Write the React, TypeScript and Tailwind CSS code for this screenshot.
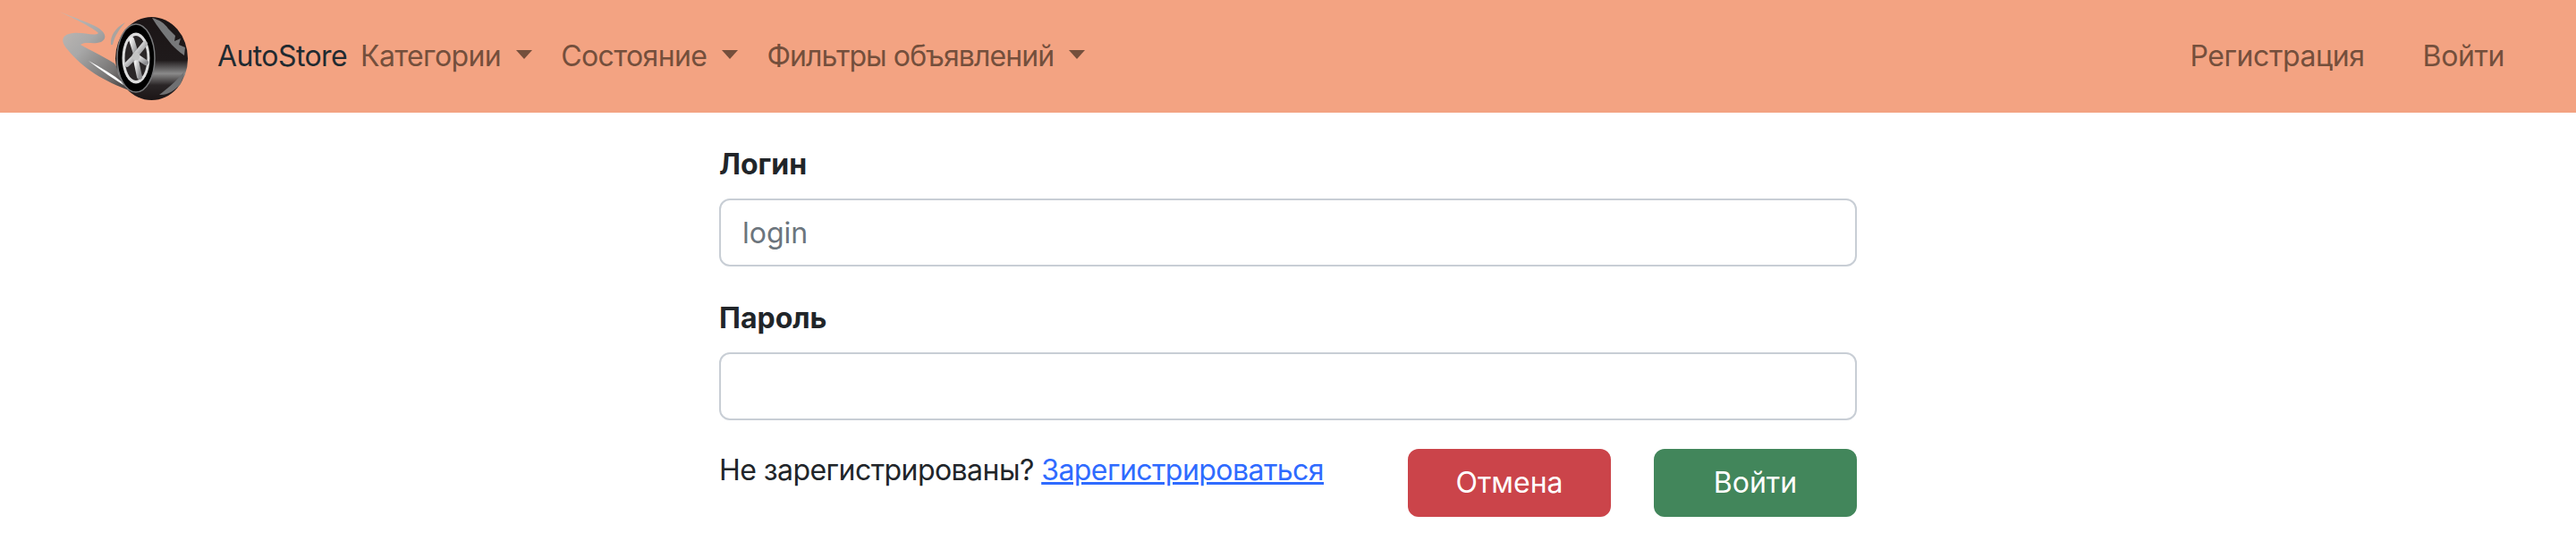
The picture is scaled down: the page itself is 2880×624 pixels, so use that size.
import React from "react";

const TireLogo = () => (
  <svg width="180" height="126" viewBox="0 0 180 126" className="shrink-0">
    <defs>
      <linearGradient id="swoosh" x1="0" y1="0" x2="1" y2="1">
        <stop offset="0" stopColor="#c4bdb8" />
        <stop offset="0.4" stopColor="#a8a8a8" />
        <stop offset="0.75" stopColor="#777574" />
        <stop offset="1" stopColor="#3a3636" />
      </linearGradient>
      <linearGradient id="band" x1="0" y1="0" x2="0" y2="1">
        <stop offset="0" stopColor="#1b1516" />
        <stop offset="0.52" stopColor="#1f1a1b" />
        <stop offset="0.68" stopColor="#8a8a8a" />
        <stop offset="0.82" stopColor="#2a2526" />
        <stop offset="1" stopColor="#1b1516" />
      </linearGradient>
      <linearGradient id="rim" x1="0" y1="0" x2="1" y2="1">
        <stop offset="0" stopColor="#eeeeee" />
        <stop offset="1" stopColor="#8c8c8f" />
      </linearGradient>
    </defs>
    <path d="M16 13C34 20 48 25 56 29C66 34 72 42 63 47C54 50 46 46 40 50C52 57 64 62 78 71L95 101C68 92 42 76 26 56C16 45 20 38 32 37C44 36 56 41 60 37C54 31 34 21 16 13Z" fill="url(#swoosh)" />
    <path d="M49 68C62 75 76 83 88 93L93 98C78 89 62 78 49 68Z" fill="#ffffff" />
    <path d="M74 50C73 40 79 31 90 25C84 32 78 40 76 50Z" fill="#a8a4a0" />
    <ellipse cx="119.5" cy="65.5" rx="40.5" ry="46.5" fill="url(#band)" />
    <path d="M120 20C128 22 134 26 138 32L146 40L145 46L152 43L150 50L157 53L156 62C150 58 146 54 142 50C134 40 126 30 120 20Z" fill="#77787a" />
    <path d="M128 106C136 100 146 92 156 80L152 94C146 100 138 107 128 106Z" fill="#6f7072" />
    <ellipse cx="102" cy="65" rx="21" ry="38" fill="#000000" stroke="#77787a" strokeWidth="1.5" />
    <ellipse cx="102" cy="65" rx="15.5" ry="28.5" fill="#dcdcdc" />
    <ellipse cx="102" cy="65" rx="12.5" ry="25" fill="#2b2728" />
    <g stroke="url(#rim)" strokeWidth="6" strokeLinecap="round" fill="none">
      <path d="M102 60L97 44" />
      <path d="M103 60L112 49" />
      <path d="M104 64L113 70" />
      <path d="M102 67L106 86" />
      <path d="M100 64L92 72" />
    </g>
    <circle cx="102" cy="63" r="4.5" fill="#c4c4c4" />
  </svg>
);

const Caret = () => (
  <span className="ml-[17px] inline-block w-0 h-0 border-x-[9px] border-x-transparent border-t-[10px] border-t-[#744f3c] mb-[4px]" />
);

const NavItem = ({ label }: { label: string }) => (
  <a className="flex items-center text-[#744f3c] cursor-pointer">
    {label}
    <Caret />
  </a>
);

export default function App() {
  return (
    <div className="min-h-[624px] bg-white font-['Inter',sans-serif] text-[32px] leading-[48px] text-[#212529]">
      <header className="h-[126px] bg-[#f3a382] flex items-center tracking-[-0.6px]">
        <div className="ml-[50px] h-full">
          <TireLogo />
        </div>
        <a className="ml-[13px] text-[#1f2a30]">AutoStore</a>
        <nav className="ml-[15px] flex items-center gap-[32px]">
          <NavItem label="Категории" />
          <NavItem label="Состояние" />
          <span className="tracking-[-0.9px]">
            <NavItem label="Фильтры объявлений" />
          </span>
        </nav>
        <div className="ml-auto mr-[80px] flex items-center gap-[65px] text-[#744f3c] tracking-[-0.4px]">
          <a>Регистрация</a>
          <a>Войти</a>
        </div>
      </header>

      <main className="w-[1272px] ml-[804px] pt-[32px]">
        <form>
          <label className="block font-bold pt-[2px] mb-[14px]">Логин</label>
          <input
            placeholder="login"
            className="block w-full h-[76px] px-[24px] border-2 border-[#c8ced5] rounded-[12px] text-[32px] placeholder:text-[#6c757d] outline-none mb-[32px]"
          />
          <label className="block font-bold pt-[2px] mb-[14px]">Пароль</label>
          <input
            type="password"
            className="block w-full h-[76px] px-[24px] border-2 border-[#c8ced5] rounded-[12px] text-[32px] outline-none mb-[32px]"
          />
          <div className="flex items-start">
            <p className="tracking-[-0.55px]">
              Не зарегистрированы?{" "}
              <a className="text-[#2f6bff] underline cursor-pointer">Зарегистрироваться</a>
            </p>
            <div className="ml-auto flex gap-[48px]">
              <button type="button" className="w-[227px] h-[76px] rounded-[12px] bg-[#cb444a] text-white">
                Отмена
              </button>
              <button type="button" className="w-[227px] h-[76px] rounded-[12px] bg-[#42865b] text-white">
                Войти
              </button>
            </div>
          </div>
        </form>
      </main>
    </div>
  );
}
